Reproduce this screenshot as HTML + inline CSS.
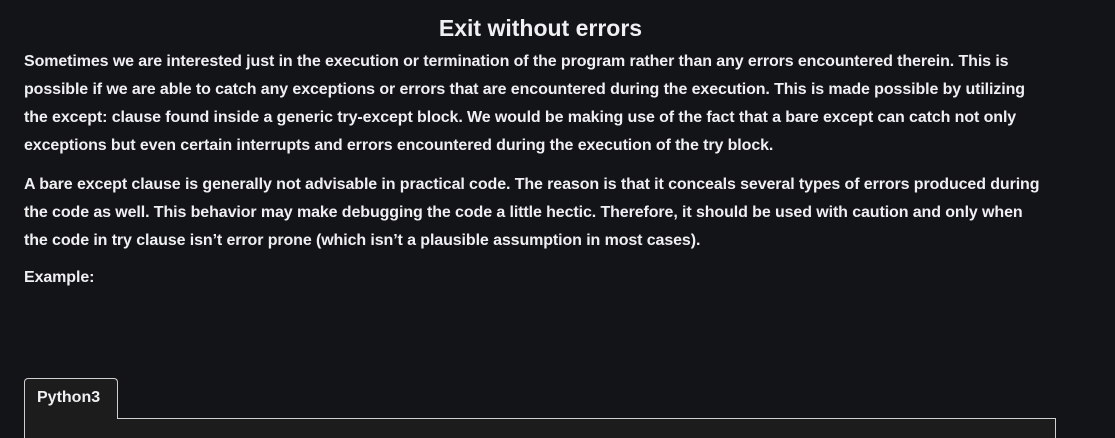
<!DOCTYPE html>
<html><head><meta charset="utf-8"><style>
body{margin:0;width:1115px;height:431px;overflow:hidden;background:#131417;color:#f0f0f2;font-family:"Liberation Sans",sans-serif;}
h1{position:absolute;top:14px;left:0;width:1081px;text-align:center;margin:0;font-size:23px;font-weight:bold;line-height:28px;}
.l{position:absolute;left:24px;white-space:nowrap;font-size:16px;line-height:20px;font-weight:bold;letter-spacing:-0.1px;}
.tab{position:absolute;left:24px;top:378px;width:94px;height:41px;border:1px solid #d0d0d0;border-bottom:none;border-radius:4px 4px 0 0;background:#1c1c1c;box-sizing:border-box;z-index:2;}
.tab span{position:absolute;left:12px;top:10px;font-size:16px;font-weight:bold;}
.code{position:absolute;left:24px;top:418px;width:1032px;height:20px;border:1px solid #d0d0d0;border-bottom:none;background:#1c1c1c;box-sizing:border-box;}
</style></head><body>
<h1>Exit without errors</h1>
<div class="l" style="top:52px">Sometimes we are interested just in the execution or termination of the program rather than any errors encountered therein. This is</div>
<div class="l" style="top:80px">possible if we are able to catch any exceptions or errors that are encountered during the execution. This is made possible by utilizing</div>
<div class="l" style="top:108px">the except: clause found inside a generic try-except block. We would be making use of the fact that a bare except can catch not only</div>
<div class="l" style="top:136px">exceptions but even certain interrupts and errors encountered during the execution of the try block.</div>
<div class="l" style="top:175px">A bare except clause is generally not advisable in practical code. The reason is that it conceals several types of errors produced during</div>
<div class="l" style="top:203px">the code as well. This behavior may make debugging the code a little hectic. Therefore, it should be used with caution and only when</div>
<div class="l" style="top:231px">the code in try clause isn’t error prone (which isn’t a plausible assumption in most cases).</div>
<div class="l" style="top:268px">Example:</div>
<div class="code"></div>
<div class="tab"><span>Python3</span></div>
</body></html>
